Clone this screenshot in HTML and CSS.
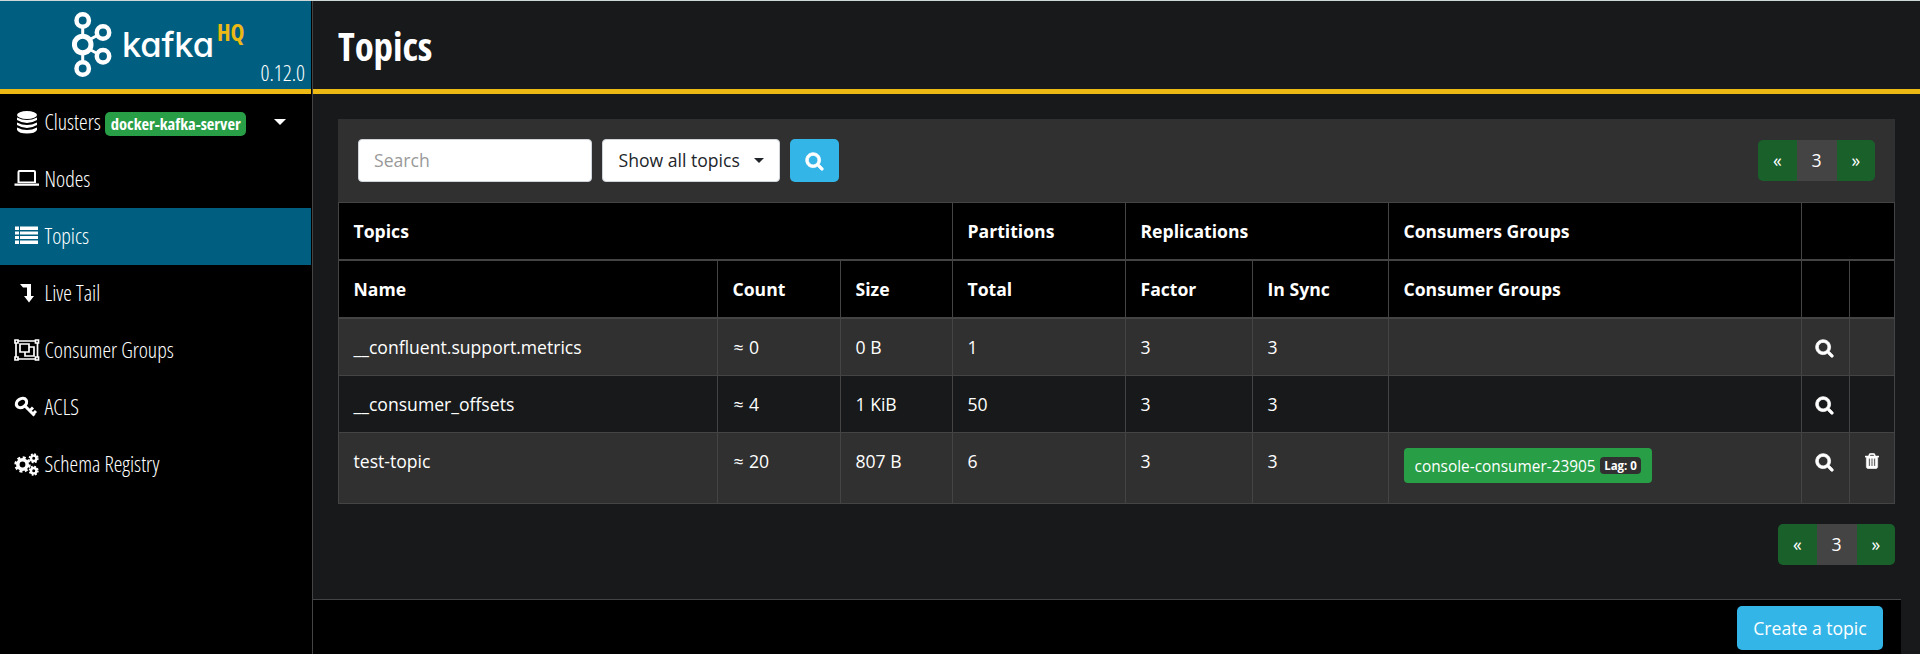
FILE: index.html
```html
<!DOCTYPE html>
<html lang="en">
<head>
<meta charset="utf-8">
<title>Topics | KafkaHQ</title>
<link rel="stylesheet" href="styles.css">
</head>
<body>
<svg class="defs" width="0" height="0">
  <symbol id="search" viewBox="0 64 1792 1792"><path stroke="#fff" stroke-width="70" d="M1216 832q0-185-131.5-316.5t-316.5-131.5-316.5 131.5-131.5 316.5 131.5 316.5 316.5 131.5 316.5-131.5 131.500-316.500zm512 832q0 52-38 90t-90 38q-54 0-90-38l-343-342q-179 124-399 124-143 0-273.500-55.500t-225-150-150-225-55.500-273.500 55.500-273.500 150-225 225-150 273.500-55.500 273.500 55.500 225 150 150 225 55.500 273.500q0 220-124 399l343 343q37 37 37 90z"/></symbol>
  <symbol id="trash" viewBox="192 128 1408 1536"><path stroke="#fff" stroke-width="40" d="M704 1376v-704q0-14-9-23t-23-9h-64q-14 0-23 9t-9 23v704q0 14 9 23t23 9h64q14 0 23-9t9-23zm256 0v-704q0-14-9-23t-23-9h-64q-14 0-23 9t-9 23v704q0 14 9 23t23 9h64q14 0 23-9t9-23zm256 0v-704q0-14-9-23t-23-9h-64q-14 0-23 9t-9 23v704q0 14 9 23t23 9h64q14 0 23-9t9-23zm-544-992h448l-48-117q-7-9-17-11h-317q-10 2-17 11zm928 32v64q0 14-9 23t-23 9h-96v948q0 83-47 143.500t-113 60.500h-832q-66 0-113-58.500t-47-141.500v-952h-96q-14 0-23-9t-9-23v-64q0-14 9-23t23-9h309l70-167q15-37 54-63t79-26h320q40 0 79 26t54 63l70 167h309q14 0 23 9t9 23z"/></symbol>
</svg>
<div class="app">
  <nav class="sidebar">
    <div class="brand">
      <svg class="logo" width="40" height="66" viewBox="0 0 40 66" fill="none" stroke="#fff">
        <path d="M10.700 14v38M17 28l9-5M17 37l9 5" stroke-width="3"/>
        <g fill="#005f81" stroke-width="4.500"><circle cx="10.700" cy="8.500" r="6.200"/><circle cx="10.700" cy="56.500" r="6.200"/><circle cx="31" cy="20.500" r="6.200"/><circle cx="31" cy="44.300" r="6.200"/><circle cx="10.700" cy="32.500" r="8.300" stroke-width="5"/></g>
      </svg>
      <span class="name">kafka</span><span class="hq">HQ</span>
      <span class="version">0.12.0</span>
    </div>
    <ul class="menu">
      <li><svg class="icon" viewBox="0 0 28 28"><ellipse cx="13" cy="7" rx="10" ry="4"/><path d="M3 9.500q10 5 20 0v2.500q-10 6-20 0zM3 14.500q10 5 20 0v2.500q-10 6-20 0zM3 19.500q10 5 20 0v2.500q-2 3.500-10 3.500t-10-3.500z"/></svg><span class="label">Clusters</span><span class="cluster">docker-kafka-server</span><i class="caret"></i></li>
      <li><svg class="icon" viewBox="0 0 28 28"><path fill-rule="evenodd" d="M3.500 7q0-2 2-2h14.500q2 0 2 2v11H3.500zM5.500 7v9.500h14.500V7zM.500 18.500h24.500v2.200H.500z"/></svg><span class="label">Nodes</span></li>
      <li class="active"><svg class="icon" viewBox="0 0 28 28"><path d="M1 4.500h4v3.500H1zM6 4.500h18v3.500H6zM1 9.500h4v3H1zM6 9.500h18v3H6zM1 14h4v3H1zM6 14h18v3H6zM1 18.500h4v3.500H1zM6 18.500h18v3.500H6z"/></svg><span class="label">Topics</span></li>
      <li><svg class="icon" viewBox="0 0 28 28"><path d="M6 5h11v12h3l-5 6.500-5-6.500h3V8.500H9z"/></svg><span class="label">Live Tail</span></li>
      <li><svg class="icon" viewBox="0 0 28 28"><path fill="none" stroke="#fff" stroke-width="1.700" d="M1 4h3v3H1zM21.500 4h3v3h-3zM1 21h3v3H1zM21.500 21h3v3h-3zM4 5h18M4 23h18M2 7v14M23.500 7v14M6 8h9v8H6zM15 11h5v9h-9v-4"/></svg><span class="label">Consumer Groups</span></li>
      <li><svg class="icon" viewBox="0 0 28 28"><g fill="none" stroke="#fff"><ellipse cx="7.500" cy="10" rx="5.500" ry="4.200" transform="rotate(-35 7.500 10)" stroke-width="3.200"/><path stroke-width="3" d="M11 13l9.500 9.500M15.500 18l3.500-3.500M19 21l3-3"/></g></svg><span class="label">ACLS</span></li>
      <li><svg class="icon" viewBox="0 0 28 28"><g fill="none" stroke="#fff"><circle cx="8.500" cy="14.500" r="4.700" stroke-width="3.600"/><circle cx="8.500" cy="14.500" r="7" stroke-width="2.400" stroke-dasharray="3 2.498"/><circle cx="19.700" cy="8.300" r="2.700" stroke-width="2.400"/><circle cx="19.700" cy="8.300" r="4.200" stroke-width="1.600" stroke-dasharray="1.800 1.500"/><circle cx="19.700" cy="20.700" r="2.700" stroke-width="2.400"/><circle cx="19.700" cy="20.700" r="4.200" stroke-width="1.600" stroke-dasharray="1.800 1.500"/></g></svg><span class="label">Schema Registry</span></li>
    </ul>
  </nav>
  <main class="content">
    <header class="title"><h1>Topics</h1></header>
    <section class="body">
      <div class="toolbar">
        <input class="search" type="text" placeholder="Search">
        <div class="select">Show all topics<i class="caret small"></i></div>
        <button class="go"><svg width="19" height="19"><use href="#search"/></svg></button>
        <div class="pages"><span>«</span><b>3</b><span>»</span></div>
      </div>
      <table>
        <colgroup><col class="c-name"><col class="c-count"><col class="c-size"><col class="c-total"><col class="c-factor"><col class="c-sync"><col class="c-groups"><col class="c-view"><col class="c-del"></colgroup>
        <thead>
          <tr><th colspan="3">Topics</th><th>Partitions</th><th colspan="2">Replications</th><th>Consumers Groups</th><th colspan="2"></th></tr>
          <tr><th>Name</th><th>Count</th><th>Size</th><th>Total</th><th>Factor</th><th>In Sync</th><th>Consumer Groups</th><th></th><th></th></tr>
        </thead>
        <tbody>
          <tr><td>__confluent.support.metrics</td><td><span class="approx">≈</span>0</td><td>0 B</td><td>1</td><td>3</td><td>3</td><td></td><td><svg class="view"><use href="#search"/></svg></td><td></td></tr>
          <tr><td>__consumer_offsets</td><td><span class="approx">≈</span>4</td><td>1 KiB</td><td>50</td><td>3</td><td>3</td><td></td><td><svg class="view"><use href="#search"/></svg></td><td></td></tr>
          <tr class="tall"><td>test-topic</td><td><span class="approx">≈</span>20</td><td>807 B</td><td>6</td><td>3</td><td>3</td><td><a class="group"><span>console-consumer-23905</span><b>Lag: 0</b></a></td><td><svg class="view"><use href="#search"/></svg></td><td><svg class="del"><use href="#trash"/></svg></td></tr>
        </tbody>
      </table>
      <div class="pages bottom"><span>«</span><b>3</b><span>»</span></div>
    </section>
    <footer class="actions"><a class="create">Create a topic</a></footer>
  </main>
</div>
</body>
</html>
```
FILE: styles.css
```css
* { box-sizing: border-box; }
body { margin: 0; background: #17191a; color: #fff; font: 17.6px/28px "Open Sans", sans-serif; overflow: hidden; }
.defs { display: block; }
svg { fill: #fff; flex: none; }
.app { display: flex; height: 654px; border-top: 1px solid #cfd8d9; }
.sidebar { width: 313px; flex: none; background: #000; border-right: 1px solid #444; }
.brand { position: relative; display: flex; width: 311px; height: 93px; padding: 11px 0 0 72px; background: #005f81; border-bottom: 5px solid #ecb914; }
.name { width: 90px; margin: 10px 0 0 10px; font: 500 34.500px/46px Inter, sans-serif; font-feature-settings: "cv11"; letter-spacing: -0.2px; }
.hq { margin: 5px 0 0 5px; color: #ecb914; font: 700 23.500px/30px "Open Sans", sans-serif; font-stretch: 75%; }
.version { position: absolute; right: 6px; bottom: 1px; font: 300 22px/32px "Open Sans", sans-serif; font-stretch: 75%; }
.menu { list-style: none; margin: 0; padding: 0; }
.menu li { display: flex; align-items: center; width: 311px; height: 57px; padding-left: 14px; font-size: 21.800px; font-weight: 300; font-stretch: 75%; }
.label { margin-top: -1px; }
.menu .active { background: #005f81; }
.icon { width: 28px; height: 28px; margin: -2px 3px 0 -0.500px; }
.cluster { margin: 2px 0 0 4.500px; width: 141px; height: 24px; border-radius: 5px; background: #289e46; font-size: 16.500px; font-weight: 700; line-height: 24px; text-align: center; }
.caret { margin: -1px 0 0 28px; border: 6px solid transparent; border-top-color: #fff; border-bottom: 0; }
.content { display: flex; flex-direction: column; flex: 1; }
.title { height: 93px; padding-left: 25px; border-bottom: 5px solid #ecb914; }
h1 { margin: 0; font-size: 39px; line-height: 90px; font-weight: 700; font-stretch: 75%; letter-spacing: -0.1px; }
.body { flex: 1; padding: 25px 25px 0; }
.toolbar { display: flex; align-items: center; gap: 10px; height: 83px; padding: 0 20px; background: #303030; }
.search, .select { height: 43px; border: 1px solid #ced4da; border-radius: 4px; background: #fff; color: #212529; font: 17.600px/41px "Open Sans", sans-serif; }
.search { width: 234px; padding: 0 15px 2px; }
.search::placeholder { color: #999; }
.select { display: flex; align-items: center; width: 178px; padding-left: 15.500px; }
.caret.small { margin-left: 14.500px; border-width: 5px 5px 0; border-top-color: #212529; }
.go { display: flex; align-items: center; justify-content: center; width: 49px; height: 43px; padding: 1px 0 0; border: 0; border-radius: 5px; background: #33b5e7; }
.pages { display: flex; width: 117px; height: 41px; margin-left: auto; border-radius: 5px; overflow: hidden; line-height: 41px; text-align: center; }
.pages span { flex: 1; background: #19602b; }
.pages b { width: 40px; background: #444; font-weight: 400; }
.pages.bottom { margin-top: 20px; }
table { width: 1557px; table-layout: fixed; border-collapse: separate; border-spacing: 0; border: solid #444; border-width: 1px 0 0 1px; }
th, td { height: 57px; padding: 14px 14px 0 14.500px; border-right: 1px solid #444; border-bottom: 1px solid #444; vertical-align: top; text-align: left; white-space: nowrap; }
th { height: 58px; border-bottom-width: 2px; background: #000; font-weight: 700; }
td { background: #303030; }
tr:nth-child(2) td { background: #17191a; }
.tall td { height: 71px; }
.c-name { width: 379px; } .c-count { width: 123px; } .c-size { width: 112px; } .c-total { width: 173px; } .c-factor { width: 127px; } .c-sync { width: 136px; } .c-groups { width: 413px; } .c-view { width: 48px; } .c-del { width: 45px; }
.approx { display: inline-block; width: 16.500px; padding-left: 1px; }
.view { display: block; width: 19px; height: 19px; margin: 6px 0 0 -1.500px; }
.del { display: block; width: 14px; height: 16px; margin-top: 6px; }
.group { display: flex; align-items: center; width: 248px; height: 35px; margin-top: 1px; padding: 2px 0 0 11px; border-radius: 4px; background: #289e46; font-size: 15.400px; }
.group b { margin: -2px 0 0 4px; padding: 0 4.500px; border-radius: 4px; background: #303030; font-size: 11.500px; line-height: 17px; }
.actions { display: flex; justify-content: flex-end; width: 1588px; height: 55px; padding: 6px 18px 0 0; border-top: 1px solid #444; background: #000; }
.create { width: 146px; height: 44px; border-radius: 5px; background: #33b5e7; text-align: center; line-height: 45px; }
```
